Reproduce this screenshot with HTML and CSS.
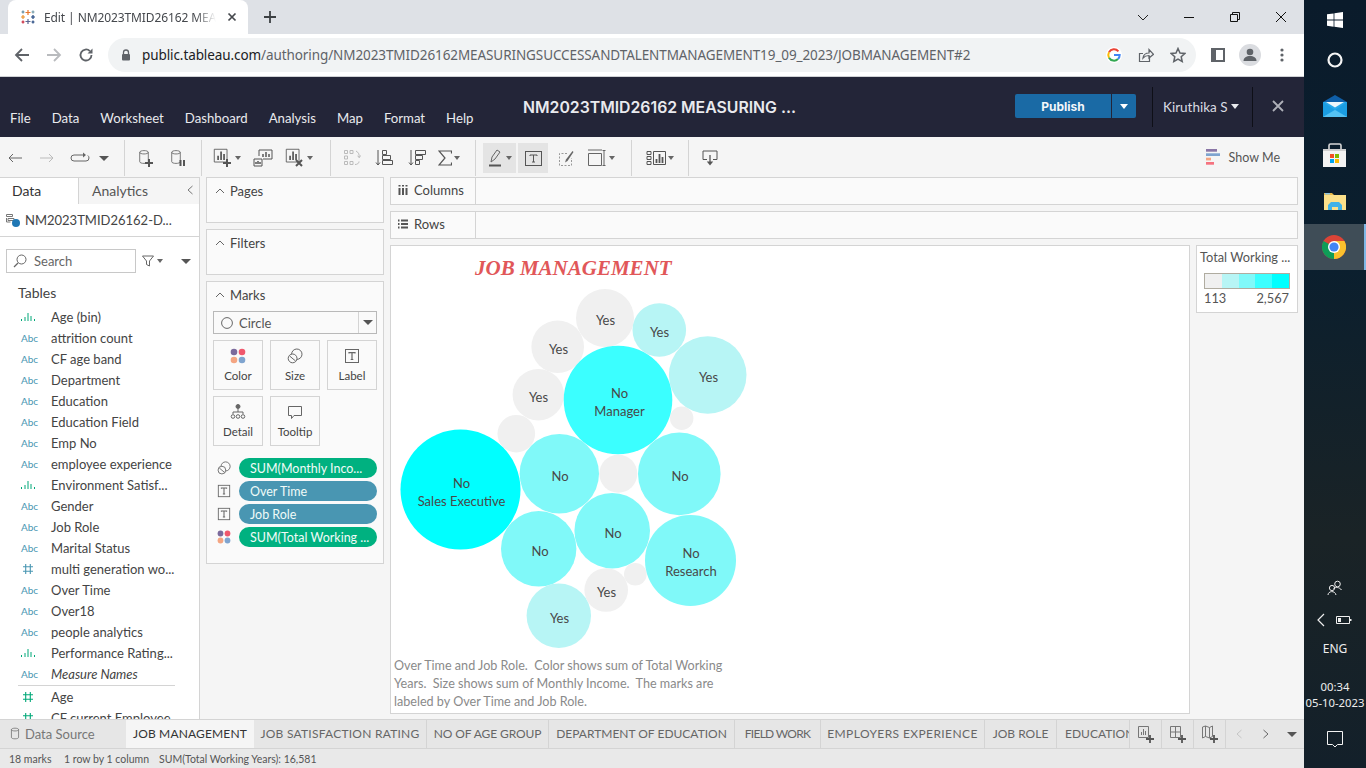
FILE: index.html
```html
<!DOCTYPE html>
<html lang="en">
<head>
<meta charset="utf-8">
<title>Edit | NM2023TMID26162 MEASURING</title>
<link rel="stylesheet" href="styles.css">
</head>
<body>
<svg class="defs" aria-hidden="true">
  <symbol id="i-t" viewBox="0 0 16 16"><rect x="1.5" y="1.5" width="13" height="13" fill="none" stroke="#666"/><path d="M5 5.5V4.6h6v.9M8 4.6v7M6.7 11.5h2.6" fill="none" stroke="#666" stroke-width="1.2"/></symbol>
  <symbol id="i-size" viewBox="0 0 16 16"><circle cx="9.8" cy="6.2" r="5.2" fill="none" stroke="#666"/><circle cx="5.6" cy="10.4" r="4.4" fill="#fafafa" stroke="#666"/><path d="M2.6 8l6 5" stroke="#666"/></symbol>
  <symbol id="i-color" viewBox="0 0 16 16"><circle cx="4" cy="4" r="3.3" fill="#7b6a9c"/><circle cx="12" cy="4" r="3.3" fill="#f0586d"/><circle cx="4" cy="12" r="3.3" fill="#f4a582"/><circle cx="12" cy="12" r="3.3" fill="#7fa4cf"/></symbol>
  <symbol id="i-bin" viewBox="0 0 16 10"><path d="M1.5 9V7M5 9V5M8 9V1M11 9V4M14.500 9V7" stroke="#00a878" fill="none"/></symbol>
  <symbol id="i-num" viewBox="0 0 12 12"><path d="M3.700 1v10M8.300 1v10M1 3.700h10M1 8.300h10" stroke="currentColor" fill="none" stroke-width="1.100"/></symbol>
  <symbol id="i-cyl" viewBox="0 0 14 18"><path d="M2 3.500c0-2.600 10-2.600 10 0v11c0 2.600-10 2.600-10 0z M2 3.500c0 2.600 10 2.600 10 0" fill="none" stroke="#666"/></symbol>
  <symbol id="i-bars" viewBox="0 0 20 20"><path d="M1.500 1.500h15v15h-15z" fill="none" stroke="#555"/><path d="M6 14V9M9.500 14V4M13 14V7" stroke="#555" stroke-width="2" fill="none"/></symbol>
</svg>

<div class="screen">
  <div class="browser">
    <div class="tabstrip">
      <div class="ctab">
        <svg class="favicon" width="16" height="16" viewBox="0 0 16 16" fill="none" stroke-width="1.200"><path d="M8 1v5M5.500 3.500h5" stroke="#e8762c"/><path d="M8 10v5M5.500 12.500h5" stroke="#5b6591"/><path d="M3 6v4M1 8h4" stroke="#eb912b"/><path d="M13 6v4M11 8h4" stroke="#1f447e"/><path d="M3 1.500v3M1.500 3h3" stroke="#59879b"/><path d="M13 1.500v3M11.500 3h3" stroke="#7099a6"/><path d="M3 11.500v3M1.500 13h3" stroke="#c72035"/><path d="M13 11.500v3M11.500 13h3" stroke="#1f447e"/></svg>
        <span class="ctab-title">Edit | NM2023TMID26162 MEASURING</span>
        <svg class="ctab-x" width="10" height="10" viewBox="0 0 10 10"><path d="M1.500 1.500l7 7M8.500 1.500l-7 7" stroke="#45484d" stroke-width="1.700"/></svg>
      </div>
      <svg class="newtab" width="14" height="14" viewBox="0 0 14 14"><path d="M7 1v12M1 7h12" stroke="#3c4043" stroke-width="1.800"/></svg>
      <div class="winctl">
        <svg width="46" height="14" viewBox="0 0 46 14"><path d="M18 5l5 5 5-5" fill="none" stroke="#222"/></svg>
        <svg width="46" height="14" viewBox="0 0 46 14"><path d="M18 7.500h10" stroke="#111"/></svg>
        <svg width="46" height="14" viewBox="0 0 46 14"><path d="M18.500 4.500h7v7h-7zM20.500 4.500v-2h7v7h-2" fill="none" stroke="#111"/></svg>
        <svg width="46" height="14" viewBox="0 0 46 14"><path d="M18 2l10 10M28 2L18 12" stroke="#111"/></svg>
      </div>
    </div>
    <div class="omnirow">
      <svg class="navic" width="16" height="16" viewBox="0 0 16 16"><path d="M15 8H2M8 2L2 8l6 6" fill="none" stroke="#5f6368" stroke-width="1.800"/></svg>
      <svg class="navic" width="16" height="16" viewBox="0 0 16 16"><path d="M1 8h13M8 2l6 6-6 6" fill="none" stroke="#b9bbbe" stroke-width="1.800"/></svg>
      <svg class="navic" width="16" height="16" viewBox="0 0 16 16"><path d="M13.500 8a5.500 5.500 0 1 1-1.600-3.900" fill="none" stroke="#5f6368" stroke-width="1.800"/><path d="M14.500 1.500v5h-5z" fill="#5f6368"/></svg>
      <div class="omnibox">
        <svg class="lock" width="10" height="12" viewBox="0 0 10 12"><path d="M2.500 5V3.500a2.500 2.500 0 0 1 5 0V5" fill="none" stroke="#5f6368" stroke-width="1.300"/><rect x="1" y="5" width="8" height="6.500" rx="1" fill="#5f6368"/></svg>
        <span class="url"><b>public.tableau.com</b>/authoring/NM2023TMID26162MEASURINGSUCCESSANDTALENTMANAGEMENT19_09_2023/JOBMANAGEMENT#2</span>
        <div class="omni-icons">
          <svg width="16" height="16" viewBox="0 0 16 16" fill="none" stroke-width="2"><circle cx="8" cy="8" r="8" fill="#fff"/><path d="M12.400 4.300A5.700 5.700 0 0 0 3 5.300" stroke="#ea4335"/><path d="M3 5.300a5.700 5.700 0 0 0 0 5.400" stroke="#fbbc05"/><path d="M3 10.700a5.700 5.700 0 0 0 9 1.300" stroke="#34a853"/><path d="M12 12a5.700 5.700 0 0 0 1.700-4H8" stroke="#4285f4"/></svg>
          <svg width="16" height="16" viewBox="0 0 16 16" fill="none" stroke="#5f6368" stroke-width="1.200"><path d="M11.500 9v5.500h-10v-8H5"/><path d="M5 11c.5-3.500 3-5 6-5V2.500l4.500 4.800L11 11V8.500c-2.500 0-4.500.8-6 2.500z"/></svg>
          <svg width="16" height="16" viewBox="0 0 16 16"><path d="M8 1.500l2 4.500 4.800.5-3.600 3.200 1 4.800L8 12l-4.200 2.500 1-4.800L1.200 6.500 6 6z" fill="none" stroke="#5f6368" stroke-width="1.500"/></svg>
        </div>
      </div>
      <div class="profile">
        <svg width="14" height="14" viewBox="0 0 14 14"><path d="M0 0h14v14H0z M5 2v10h7V2z" fill="#5f6368" fill-rule="evenodd"/></svg>
        <span class="avatar"><svg width="14" height="14" viewBox="0 0 14 14"><circle cx="7" cy="4" r="3.300" fill="#5f6368"/><path d="M0.500 13c0-3.500 3-5 6.500-5s6.500 1.500 6.500 5z" fill="#5f6368"/></svg></span>
        <svg width="4" height="14" viewBox="0 0 4 14"><circle cx="2" cy="2" r="1.600" fill="#5f6368"/><circle cx="2" cy="7" r="1.600" fill="#5f6368"/><circle cx="2" cy="12" r="1.600" fill="#5f6368"/></svg>
      </div>
    </div>
  </div>

  <header class="appbar">
    <nav class="menu"><span>File</span><span>Data</span><span>Worksheet</span><span>Dashboard</span><span>Analysis</span><span>Map</span><span>Format</span><span>Help</span></nav>
    <div class="wbtitle">NM2023TMID26162 MEASURING ...</div>
    <div class="appright">
      <div class="publish"><span class="pub-main">Publish</span><span class="pub-arrow"></span></div>
      <div class="user">Kiruthika S<span class="user-caret"></span></div>
      <svg class="appclose" width="12" height="12" viewBox="0 0 12 12"><path d="M1 1l10 10M11 1L1 11" stroke="#aeb0b8" stroke-width="1.800"/></svg>
    </div>
  </header>

  <div class="toolbar">
    <div class="tg tg1">
      <span class="tb w30"><svg width="14" height="10" viewBox="0 0 14 10"><path d="M14 5H1M5 1L1 5l4 4" fill="none" stroke="#666"/></svg></span>
      <span class="tb w33"><svg width="14" height="10" viewBox="0 0 14 10"><path d="M0 5h13M9 1l4 4-4 4" fill="none" stroke="#bbb"/></svg></span>
      <span class="tb w34"><svg width="20" height="12" viewBox="0 0 20 12"><path d="M13 3H4a3 3 0 0 0 0 6h12a3 3 0 0 0 3-3c0-1-.4-2-1.200-2.500" fill="none" stroke="#666"/><path d="M13 .5v5l3-2.500z" fill="#666"/></svg></span>
      <span class="tb w14"><i class="caret big"></i></span>
    </div>
    <div class="tg tg2">
      <span class="tb w32"><svg width="18" height="18" viewBox="0 0 18 18"><use href="#i-cyl" width="12" height="16"/><path d="M11 10v8M7 14h8" stroke="#555" stroke-width="2" fill="none"/></svg></span>
      <span class="tb w32"><svg width="18" height="18" viewBox="0 0 18 18"><use href="#i-cyl" width="12" height="16"/><path d="M10.500 11v6M14 11v6" stroke="#555" stroke-width="2" fill="none"/></svg></span>
    </div>
    <div class="tg tg3">
      <span class="tb w34"><svg width="20" height="20" viewBox="0 0 20 20"><use href="#i-bars" width="17" height="17"/><path d="M14 11v8M10 15h8" stroke="#555" stroke-width="2" fill="none"/></svg><i class="caret"></i></span>
      <span class="tb w38"><svg width="20" height="18" viewBox="0 0 20 18"><path d="M6 7V1h13v9h-9M1 10h8v7H1z" fill="#f5f5f5" stroke="#555"/><path d="M10 8V5M13 8V3M16 8V5M3 15v-2M5 15v-3M7 15v-2" stroke="#555" stroke-width="1.500"/></svg></span>
      <span class="tb w34"><svg width="20" height="20" viewBox="0 0 20 20"><use href="#i-bars" width="17" height="17"/><path d="M11 12l6 6M17 12l-6 6" stroke="#555" stroke-width="2" fill="none"/></svg><i class="caret"></i></span>
    </div>
    <div class="tg tg4">
      <span class="tb w32"><svg width="18" height="18" viewBox="0 0 18 18" fill="none" stroke="#bbb"><path d="M1.500 1.500h3v3h-3zM7 1.500h3v3H7zM1.500 7h3v3h-3zM1.500 12.500h3v3h-3zM7 12.500h3v3H7zM13 2a6 6 0 0 1 3 6.500M16.500 8.500l-2-1.500M16.500 8.500l1-2M12 15.500c2 0 4-1 4-3"/></svg></span>
      <span class="tb w32"><svg width="18" height="18" viewBox="0 0 18 18" fill="none" stroke="#555"><path d="M3 1v15M1 13.500l2 2.500 2-2.500M7.500 1.500h4v4h-4zM7.500 6.500h8v4h-8zM7.500 11.500h10v4h-10z"/></svg></span>
      <span class="tb w34"><svg width="18" height="18" viewBox="0 0 18 18" fill="none" stroke="#555"><path d="M3 1v15M1 13.500l2 2.500 2-2.500M7.500 11.500h4v4h-4zM7.500 6.500h7v4h-7zM7.500 1.500h10v4h-10z"/></svg></span>
      <span class="tb w30"><svg width="14" height="16" viewBox="0 0 14 16"><path d="M13.500 3.500V1H1l6 7-6 7h12.500v-2.500" fill="none" stroke="#555" stroke-width="1.200"/></svg><i class="caret"></i></span>
    </div>
    <div class="tg tg5">
      <span class="tb w33 on"><svg width="16" height="18" viewBox="0 0 16 18"><path d="M3 13l1-5 5-7 3 2-5 7z" fill="none" stroke="#666"/><path d="M1 16.500h12" stroke="#555" stroke-width="2"/></svg><i class="caret"></i></span>
      <span class="tb w30 on gap2"><svg width="17" height="15" viewBox="0 0 17 15"><rect x=".5" y=".5" width="16" height="14" fill="none" stroke="#555"/><path d="M5 5V4h7v1M8.500 4v7M7 11h3" fill="none" stroke="#555"/></svg></span>
      <span class="tb w32"><svg width="16" height="16" viewBox="0 0 16 16"><path d="M9 3.500H1.500v12h12V8" fill="none" stroke="#999" stroke-dasharray="2 1.500"/><path d="M14.500 1L8 9.500 7 12.500l2.500-1.500L15.500 2z" fill="#666"/></svg></span>
      <span class="tb w38"><svg width="20" height="18" viewBox="0 0 20 18" fill="none" stroke="#666"><path d="M1 1h14M1.500 4.500h13v12h-13zM17 2v14M15.500 1.500h3M15.500 16.500h3"/></svg><i class="caret"></i></span>
    </div>
    <div class="tg tg6">
      <span class="tb w44"><svg width="20" height="16" viewBox="0 0 20 16" fill="none" stroke="#555"><path d="M1 1.500h4v3H1zM1 6.500h4v3H1zM1 11.500h4v3H1zM7.500 1.500h12v13h-12z"/><path d="M10.500 13V9M13.500 13V4M16.500 13V7" stroke-width="1.800"/></svg><i class="caret"></i></span>
    </div>
    <div class="tg tg7">
      <span class="tb w34"><svg width="16" height="16" viewBox="0 0 16 16" fill="none" stroke="#555"><path d="M5 9.500H1V1h14v8.500h-4"/><path d="M8 5v9" stroke-width="1.300"/><path d="M4.800 11.500h6.400L8 15.500z" fill="#555" stroke="none"/></svg></span>
    </div>
    <div class="showme">
      <svg width="14" height="16" viewBox="0 0 14 16"><path d="M0 0h11v2.700H0z" fill="#8a76a6"/><path d="M0 4.300h14V7H0z" fill="#7fa4cf"/><path d="M0 8.700h5v2.700H0z" fill="#f4a582"/><path d="M0 13h8v2.700H0z" fill="#f5727f"/></svg>
      <span>Show Me</span>
    </div>
  </div>

  <main class="workspace">
    <aside class="datapane">
      <div class="dp-tabs">
        <div class="dp-tab active">Data</div>
        <div class="dp-tab">Analytics<svg width="6" height="10" viewBox="0 0 6 10"><path d="M5.500 1L1 5l4.500 4" fill="none" stroke="#777"/></svg></div>
      </div>
      <div class="dsrow">
        <svg width="16" height="16" viewBox="0 0 16 16"><path d="M1.500 2.500h6v2h-6zM3 6.500h6v2H3zM1.500 6v4h4" fill="none" stroke="#777"/><circle cx="11" cy="11" r="4" fill="#1f77b4"/></svg>
        <span>NM2023TMID26162-D...</span>
      </div>
      <div class="searchrow">
        <div class="searchbox"><svg width="14" height="14" viewBox="0 0 14 14"><circle cx="8.500" cy="5.500" r="4.500" fill="none" stroke="#666"/><path d="M5 9l-4 4" stroke="#666" stroke-width="1.300"/></svg><span>Search</span></div>
        <svg class="filtic" width="12" height="12" viewBox="0 0 12 12"><path d="M.5 1h11L7.500 6v5l-3-1.500V6z" fill="none" stroke="#666"/></svg><i class="caret"></i>
        <span class="vsep"></span>
        <i class="caret big"></i>
      </div>
      <div class="tables-h">Tables</div>
      <ul class="fields">
        <li><svg class="fic" width="16" height="10"><use href="#i-bin"/></svg>Age (bin)</li>
        <li><span class="abc">Abc</span>attrition count</li>
        <li><span class="abc">Abc</span>CF age band</li>
        <li><span class="abc">Abc</span>Department</li>
        <li><span class="abc">Abc</span>Education</li>
        <li><span class="abc">Abc</span>Education Field</li>
        <li><span class="abc">Abc</span>Emp No</li>
        <li><span class="abc">Abc</span>employee experience</li>
        <li><svg class="fic" width="16" height="10"><use href="#i-bin"/></svg>Environment Satisf...</li>
        <li><span class="abc">Abc</span>Gender</li>
        <li><span class="abc">Abc</span>Job Role</li>
        <li><span class="abc">Abc</span>Marital Status</li>
        <li><svg class="fic num dim" width="16" height="12"><use href="#i-num" width="12" height="12" x="2"/></svg>multi generation wo...</li>
        <li><span class="abc">Abc</span>Over Time</li>
        <li><span class="abc">Abc</span>Over18</li>
        <li><span class="abc">Abc</span>people analytics</li>
        <li><svg class="fic" width="16" height="10"><use href="#i-bin"/></svg>Performance Rating...</li>
        <li><span class="abc">Abc</span><em>Measure Names</em></li>
        <li class="fdiv"></li>
        <li><svg class="fic num" width="16" height="12"><use href="#i-num" width="12" height="12" x="2"/></svg>Age</li>
        <li><svg class="fic num" width="16" height="12"><use href="#i-num" width="12" height="12" x="2"/></svg>CF current Employee</li>
      </ul>
    </aside>

    <section class="cards">
      <div class="card short"><div class="card-h"><svg width="10" height="6" viewBox="0 0 10 6"><path d="M1 5l4-4 4 4" fill="none" stroke="#666"/></svg>Pages</div></div>
      <div class="card short"><div class="card-h"><svg width="10" height="6" viewBox="0 0 10 6"><path d="M1 5l4-4 4 4" fill="none" stroke="#666"/></svg>Filters</div></div>
      <div class="card marks">
        <div class="card-h"><svg width="10" height="6" viewBox="0 0 10 6"><path d="M1 5l4-4 4 4" fill="none" stroke="#666"/></svg>Marks</div>
        <div class="marktype">
          <span class="mt-main"><svg width="12" height="12" viewBox="0 0 12 12"><circle cx="6" cy="6" r="5.400" fill="none" stroke="#666"/></svg>Circle</span>
          <span class="mt-arrow"><i class="caret big"></i></span>
        </div>
        <div class="markbtns">
          <div class="mbtn"><svg width="16" height="16"><use href="#i-color"/></svg>Color</div>
          <div class="mbtn"><svg width="16" height="16"><use href="#i-size"/></svg>Size</div>
          <div class="mbtn"><svg width="16" height="16"><use href="#i-t"/></svg>Label</div>
          <div class="mbtn"><svg width="16" height="16" viewBox="0 0 16 16" fill="none" stroke="#666"><circle cx="8" cy="2.500" r="2" fill="#666"/><path d="M8 5v3M3 10V8h10v2"/><circle cx="3" cy="12.500" r="1.800"/><circle cx="8" cy="12.500" r="1.800"/><circle cx="13" cy="12.500" r="1.800"/></svg>Detail</div>
          <div class="mbtn"><svg width="16" height="16" viewBox="0 0 16 16"><path d="M1.500 2.500h13v9H7l-2.500 3v-3h-3z" fill="none" stroke="#666"/></svg>Tooltip</div>
        </div>
        <div class="pills">
          <div class="pillrow"><svg width="14" height="14"><use href="#i-size" width="14" height="14"/></svg><span class="pill m">SUM(Monthly Inco...</span></div>
          <div class="pillrow"><svg width="14" height="14"><use href="#i-t" width="14" height="14"/></svg><span class="pill d">Over Time</span></div>
          <div class="pillrow"><svg width="14" height="14"><use href="#i-t" width="14" height="14"/></svg><span class="pill d">Job Role</span></div>
          <div class="pillrow"><svg width="14" height="14"><use href="#i-color" width="14" height="14"/></svg><span class="pill m">SUM(Total Working ...</span></div>
        </div>
      </div>
    </section>

    <section class="sheet">
      <div class="shelf"><div class="shelf-l"><svg width="10" height="10" viewBox="0 0 10 10"><path d="M1.500 3v7M5 3v7M8.500 3v7M1.500 0v1.500M5 0v1.500M8.500 0v1.500" stroke="#555" stroke-width="2"/></svg>Columns</div></div>
      <div class="shelf"><div class="shelf-l"><svg width="10" height="10" viewBox="0 0 10 10"><path d="M3 1.500h7M3 5h7M3 8.500h7M0 1.500h1.500M0 5h1.500M0 8.500h1.500" stroke="#555" stroke-width="2"/></svg>Rows</div></div>
      <div class="viewrow">
        <div class="view">
          <h1 class="viz-title">JOB MANAGEMENT</h1>
          <svg class="viz" width="798" height="371" viewBox="391 281 798 371">
            <g class="c0"><circle cx="605" cy="318" r="29"/><circle cx="557.700" cy="346.700" r="26.300"/><circle cx="538.300" cy="394.700" r="25.700"/><circle cx="681.700" cy="418.300" r="11.700"/><circle cx="516.300" cy="433.700" r="18.800"/><circle cx="618.300" cy="473.700" r="19"/><circle cx="606.200" cy="590" r="21.800"/><circle cx="635.300" cy="574.300" r="11.300"/></g>
            <g class="c1"><circle cx="659.300" cy="330" r="26.800"/><circle cx="707.700" cy="375" r="38.800"/><circle cx="558.800" cy="615.800" r="32.200"/></g>
            <g class="c2"><circle cx="559.300" cy="473.800" r="39.700"/><circle cx="679.300" cy="473.900" r="41.300"/><circle cx="612.200" cy="530.700" r="37.800"/><circle cx="538.700" cy="548.800" r="37.700"/><circle cx="690.500" cy="560.500" r="45.500"/></g>
            <circle class="c3" cx="618" cy="400" r="54.300"/>
            <circle class="c4" cx="460.500" cy="489.600" r="60"/>
            <g class="lbl" transform="translate(0 1)">
              <text x="605.500" y="323.500">Yes</text><text x="659.500" y="335.500">Yes</text><text x="558.500" y="352.500">Yes</text><text x="708.500" y="380.500">Yes</text><text x="538.500" y="400.500">Yes</text>
              <text x="619.500" y="397">No</text><text x="619.500" y="415">Manager</text>
              <text x="461.500" y="487">No</text><text x="461.500" y="505">Sales Executive</text>
              <text x="560" y="480">No</text><text x="680" y="480">No</text><text x="613" y="537">No</text><text x="540" y="555">No</text>
              <text x="691" y="557">No</text><text x="691" y="575">Research</text>
              <text x="606.500" y="596">Yes</text><text x="559.500" y="622">Yes</text>
            </g>
          </svg>
          <p class="caption">Over Time and Job Role.&nbsp; Color shows sum of Total Working<br>Years.&nbsp; Size shows sum of Monthly Income.&nbsp; The marks are<br>labeled by Over Time and Job Role.</p>
        </div>
        <div class="legend">
          <div class="lg-title">Total Working ...</div>
          <div class="ramp"><i class="s0"></i><i class="s1"></i><i class="s2"></i><i class="s3"></i><i class="s4"></i></div>
          <div class="lg-vals"><span>113</span><span>2,567</span></div>
        </div>
      </div>
    </section>
  </main>

  <div class="sheettabs">
    <div class="dsource"><svg width="10" height="13" viewBox="0 0 14 18"><use href="#i-cyl"/></svg>Data Source</div>
    <div class="tablist">
      <span class="stab active">JOB MANAGEMENT</span>
      <span class="stab">JOB SATISFACTION RATING</span>
      <span class="stab">NO OF AGE GROUP</span>
      <span class="stab">DEPARTMENT OF EDUCATION</span>
      <span class="stab">FIELD WORK</span>
      <span class="stab">EMPLOYERS EXPERIENCE</span>
      <span class="stab">JOB ROLE</span>
      <span class="stab">EDUCATION FIELD</span>
    </div>
    <span class="tabtool"><svg width="18" height="18" viewBox="0 0 18 18"><path d="M1.500 1.500h10v11h-10z" fill="none" stroke="#777"/><path d="M4.500 10V7M6.500 10V4M8.500 10V6" stroke="#777"/><path d="M13 10v8M9 14h8" stroke="#555" stroke-width="1.800"/></svg></span>
    <span class="tabtool"><svg width="18" height="18" viewBox="0 0 18 18"><path d="M1.500 1.500h10v11h-10zM1.500 7h10M6.500 1.500v11" fill="none" stroke="#777"/><path d="M13 10v8M9 14h8" stroke="#555" stroke-width="1.800"/></svg></span>
    <span class="tabtool"><svg width="18" height="18" viewBox="0 0 18 18"><path d="M1.500 2v11l3-1.500 4 1.500 3-1.500V1l-3 1.500-4-1.500zM4.500 1v10.500M8.500 2.500V13" fill="none" stroke="#777"/><path d="M13 10v8M9 14h8" stroke="#555" stroke-width="1.800"/></svg></span>
    <span class="tabnav"><svg width="6" height="10" viewBox="0 0 6 10"><path d="M5.500 1L1 5l4.500 4" fill="none" stroke="#c4c4c4"/></svg></span>
    <span class="tabnav"><svg width="6" height="10" viewBox="0 0 6 10"><path d="M.5 1L5 5 .5 9" fill="none" stroke="#666"/></svg></span>
    <span class="tabnav"><i class="caret big"></i></span>
  </div>
  <footer class="status"><span>18 marks</span><span>1 row by 1 column</span><span>SUM(Total Working Years): 16,581</span></footer>
</div>

<aside class="taskbar">
  <div class="tk tk-win"><svg width="16" height="16" viewBox="0 0 16 16"><path d="M0 2.300l6.600-.9v6.200H0zM7.400 1.300L16 0v7.600H7.400zM0 8.400h6.600v6.300L0 13.700zM7.400 8.400H16V16l-8.600-1.200z" fill="#fff"/></svg></div>
  <div class="tk tk-cortana"><svg width="16" height="16" viewBox="0 0 16 16"><circle cx="8" cy="8" r="6.500" fill="none" stroke="#f4f4f4" stroke-width="2.200"/></svg></div>
  <div class="tk tk-mail"><svg width="24" height="22" viewBox="0 0 24 22"><path d="M0 7L12 0l12 7v3H0z" fill="#0f5fa8"/><path d="M0 7h24v15H0z" fill="#29a8ea"/><path d="M3 7h18l-9 5.500z" fill="#eef6fb"/><path d="M0 7l12 8 12-8v15l-12-7.500L0 22z" fill="#1b9de2"/><path d="M12 15l12 7H0z" fill="#55c2f2"/></svg></div>
  <div class="tk tk-store"><svg width="24" height="24" viewBox="0 0 24 24"><path d="M6 6V2.500A1.500 1.500 0 0 1 7.500 1h9A1.500 1.500 0 0 1 18 2.500V6" fill="none" stroke="#d8d8d8" stroke-width="1.600"/><path d="M0 6h23v18H0z" fill="#f3f3f3"/><path d="M0 6h23v2H0z" fill="#cfcfcf"/><path d="M7 11h4v4H7z" fill="#f25022"/><path d="M12 11h4v4h-4z" fill="#7fba00"/><path d="M7 16h4v4H7z" fill="#00a4ef"/><path d="M12 16h4v4h-4z" fill="#ffb900"/></svg></div>
  <div class="tk tk-folder"><svg width="22" height="18" viewBox="0 0 22 18"><path d="M0 1h8l2 2h12v15H0z" fill="#e8b94a"/><path d="M0 3h22v15H0z" fill="#fbe08a"/><path d="M1 1h5v1.500H1z" fill="#8cc4e0"/><path d="M4 18v-5l3-3h8l3 3v5h-4v-3H8v3z" fill="#3fb2e8"/></svg></div>
  <div class="tk tk-chrome"><svg width="24" height="24" viewBox="0 0 24 24"><circle cx="12" cy="12" r="12" fill="#db4437"/><path d="M12 12L1.600 6A12 12 0 0 0 12 24z" fill="#0f9d58"/><path d="M12 12v12A12 12 0 0 0 22.400 6H12z" fill="#fbc02d"/><circle cx="12" cy="12" r="6" fill="#fff"/><circle cx="12" cy="12" r="4.600" fill="#4285f4"/></svg></div>
  <div class="tray">
    <svg width="16" height="16" viewBox="0 0 16 16" fill="none" stroke="#eee"><circle cx="10.500" cy="4" r="2.800"/><path d="M6.500 8.500c2-1.500 6-1.500 8 1.500"/><circle cx="5" cy="8" r="2.600"/><path d="M1 15c0-4 7-5 8 0"/></svg>
    <div class="tray-row"><svg width="8" height="14" viewBox="0 0 8 14"><path d="M7 1L1 7l6 6" fill="none" stroke="#eee" stroke-width="1.200"/></svg><svg width="16" height="10" viewBox="0 0 16 10"><path d="M.5 1.500h13v7H.5z" fill="none" stroke="#eee"/><path d="M2 3h3v4H2z" fill="#eee"/><path d="M14 4h1.500v2H14z" fill="#eee"/></svg></div>
    <div class="lang">ENG</div>
    <div class="clock">00:34<br>05-10-2023</div>
    <svg class="notif" width="16" height="17" viewBox="0 0 16 17"><path d="M.5.500h15v13h-5L8 16l-2.500-2.500h-5z" fill="none" stroke="#f4f4f4"/></svg>
  </div>
</aside>
</body>
</html>
```

FILE: styles.css
```css
* { box-sizing: border-box; }
html, body { margin: 0; padding: 0; height: 768px; overflow: hidden; }
body { display: flex; width: 1366px; font-family: "Lato", "Liberation Sans", sans-serif; color: #333; background: #f5f5f5; }
.defs { display: none; }
svg { display: block; flex: none; }
ul, h1, p { margin: 0; padding: 0; }

.screen { width: 1304px; height: 768px; display: flex; flex-direction: column; flex: none; }

/* browser chrome */
.browser { font-family: "Noto Sans", "Open Sans", sans-serif; }
.tabstrip { height: 34px; background: #dee1e6; display: flex; align-items: center; }
.ctab { width: 240px; height: 34px; margin-left: 8px; background: #fff; border-radius: 8px 8px 0 0; display: flex; align-items: center; padding: 0 11px 0 12px; flex: none; }
.favicon { margin-right: 8px; }
.ctab-title { width: 172px; overflow: hidden; white-space: nowrap; font-size: 12px; letter-spacing: -.1px; color: #45484d; -webkit-mask-image: linear-gradient(90deg, #000 88%, transparent); mask-image: linear-gradient(90deg, #000 88%, transparent); }
.ctab-x { margin-left: auto; }
.newtab { margin-left: 15px; }
.winctl { margin-left: auto; display: flex; margin-right: 0; }
.omnirow { height: 43px; background: #fff; border-bottom: 1px solid #d0d2d5; display: flex; align-items: center; padding: 0 0 1px 14px; }
.navic { margin-right: 16px; }
.navic:nth-child(3) { margin-right: 14px; }
.omnibox { width: 1088px; height: 34px; background: #f1f3f4; border-radius: 17px; display: flex; align-items: center; padding: 0 10px 0 13px; }
.lock { margin-right: 11px; }
.url { font-size: 13.500px; color: #5f6368; white-space: nowrap; letter-spacing: -.09px; }
.url b { font-weight: 400; color: #202124; }
.omni-icons { margin-left: auto; display: flex; gap: 16px; }
.profile { display: flex; align-items: center; margin-left: 15px; }
.avatar { width: 22px; height: 22px; margin: 0 19px 0 14px; border-radius: 50%; background: #dadce0; display: flex; align-items: center; justify-content: center; }

/* tableau header */
.appbar { height: 60px; background: #232538; color: #e9eaee; display: flex; padding-left: 10px; flex: none; }
.menu { width: 513px; display: flex; gap: 21px; align-items: flex-end; padding-bottom: 11px; font-size: 13.200px; }
.wbtitle { font-family: "Inter", "Liberation Sans", sans-serif; font-size: 15.800px; font-weight: 600; padding-top: 21px; color: #e9eaee; white-space: nowrap; }
.appright { margin-left: auto; display: flex; align-items: center; height: 60px; }
.publish { display: flex; height: 24px; margin-top: -2px; }
.pub-main { width: 96px; background: #1a6aa5; border-radius: 2px 0 0 2px; color: #f2f6fa; font-family: "Inter", sans-serif; font-size: 12px; font-weight: 700; display: flex; align-items: center; justify-content: center; }
.pub-arrow { width: 24px; margin-left: 1px; background: #1a6aa5; border-radius: 0 2px 2px 0; display: flex; align-items: center; justify-content: center; }
.pub-arrow::after { content: ""; border: 4px solid transparent; border-top: 5px solid #fff; border-bottom: 0; }
.user { width: 101px; height: 40px; margin: 0 0 0 16px; border: solid #0e0f17; border-width: 0 1px; display: flex; align-items: center; padding-left: 10px; font-size: 13.500px; color: #d9dbe2; margin-top: -1px; }
.user-caret { margin-left: 3px; border: 4px solid transparent; border-top: 5px solid #e9eaee; border-bottom: 0; }
.appclose { margin: -2px 20px 0 19px; }

/* toolbar */
.toolbar { height: 40px; flex: none; background: #f5f5f5; display: flex; align-items: stretch; padding-top: 3px; padding-bottom: 1px; }
.tg { display: flex; align-items: center; border-right: 1px solid #d4d4d4; height: 36px; }
.tg1 { width: 125px; }
.tg2 { width: 77px; padding-left: 6px; }
.tg3 { width: 129px; padding-left: 8px; }
.tg4 { width: 145px; padding-left: 5px; }
.tg5 { width: 156px; padding-left: 7px; }
.tg6 { width: 57px; padding-left: 6px; }
.tg7 { border: 0; padding-left: 4px; width: 40px; }
.tb { display: flex; align-items: center; justify-content: center; height: 30px; gap: 2px; }
.w14 { width: 14px; } .w30 { width: 30px; } .w32 { width: 32px; } .w33 { width: 33px; } .w34 { width: 34px; } .w38 { width: 38px; } .w44 { width: 44px; }
.on { background: #e4e4e4; }
.gap2 { margin-left: 2px; margin-right: 2px; }
.caret { display: inline-block; flex: none; border: 3px solid transparent; border-top: 4px solid #666; border-bottom: 0; }
.caret.big { border-width: 5px 5px 0; border-top-color: #555; }
.showme { margin-left: auto; display: flex; align-items: center; gap: 9px; padding-right: 24px; font-size: 12.500px; color: #555; margin-top: -2px; }

/* workspace */
.workspace { flex: 1; min-height: 0; background: #f5f5f5; display: grid; grid-template-columns: 200px 178px 908px; column-gap: 6px; }
.datapane { background: #fff; border-right: 1px solid #d4d4d4; border-top: 1px solid #d4d4d4; display: flex; flex-direction: column; min-height: 0; overflow: hidden; }
.dp-tabs { height: 26px; display: flex; flex: none; font-size: 14px; }
.dp-tab { display: flex; align-items: center; justify-content: space-between; padding-bottom: 2px; }
.dp-tab.active { width: 79px; padding-left: 12px; background: #fff; color: #333; border-right: 1px solid #d4d4d4; }
.dp-tab:not(.active) { flex: 1; padding-left: 13px; padding-right: 6px; background: #f5f5f5; color: #555; }
.dsrow { height: 33px; flex: none; display: flex; align-items: center; gap: 4px; padding: 0 0 1px 5px; border-bottom: 1px solid #d4d4d4; font-size: 13px; color: #444; }
.searchrow { height: 47px; flex: none; display: flex; align-items: center; padding: 1px 9px 0 6px; }
.searchbox { width: 130px; height: 24px; flex: none; border: 1px solid #c8c8c8; display: flex; align-items: center; gap: 7px; padding-left: 6px; font-size: 13px; color: #666; margin-right: 6px; }
.filtic { margin-right: 3px; }
.vsep { width: 1px; height: 24px; background: #d4d4d4; margin: 0 11px 0 7px; }
.tables-h { font-size: 14px; line-height: 17px; padding-left: 18px; color: #444; height: 22px; flex: none; }
.fields { list-style: none; flex: 1; min-height: 0; overflow: hidden; }
.fields li { height: 21px; display: flex; align-items: center; font-size: 13px; color: #444; white-space: nowrap; }
.fields .fdiv { height: 1px; margin: 1px 24px 0 18px; background: #d4d4d4; }
.abc { width: 30px; margin-left: 21px; font-size: 10px; color: #4996b2; flex: none; }
.fic { margin-left: 20px; margin-right: 15px; }
.num { color: #00a878; }
.dim { color: #4996b2; }

/* cards */
.cards { display: flex; flex-direction: column; gap: 6px; min-height: 0; }
.card { background: #fafafa; border: 1px solid #d4d4d4; flex: none; }
.card.short { height: 46px; }
.card-h { display: flex; align-items: center; gap: 5px; padding: 5px 0 0 8px; font-size: 13px; color: #444; }
.marks { height: 283px; padding-bottom: 6px; }
.marktype { margin: 8px 6px 0; height: 23px; border: 1px solid #b9b9b9; display: flex; font-size: 13px; color: #555; background: #fafafa; }
.mt-main { flex: 1; display: flex; align-items: center; gap: 6px; padding-left: 7px; }
.mt-arrow { width: 18px; border-left: 1px solid #d4d4d4; display: flex; align-items: center; justify-content: center; }
.markbtns { display: grid; grid-template-columns: repeat(3, 50px); grid-auto-rows: 50px; gap: 6px 7px; margin: 6px 6px 0; }
.mbtn { border: 1px solid #d4d4d4; display: flex; flex-direction: column; align-items: center; justify-content: center; gap: 5px; font-size: 11.500px; color: #444; }
.pills { margin: 12px 6px 0 10px; display: flex; flex-direction: column; gap: 3px; }
.pillrow { display: flex; align-items: center; gap: 8px; }
.pill { width: 138px; height: 20px; border-radius: 10px; color: #f0fbf8; font-size: 12.500px; padding-left: 11px; display: flex; align-items: center; white-space: nowrap; overflow: hidden; }
.pill.m { background: #00b180; }
.pill.d { background: #4996b2; }

/* shelves and view */
.sheet { display: flex; flex-direction: column; gap: 6px; min-height: 0; }
.shelf { height: 28px; flex: none; background: #fafafa; border: 1px solid #d4d4d4; display: flex; }
.shelf-l { width: 85px; border-right: 1px solid #d4d4d4; display: flex; align-items: center; gap: 6px; padding: 0 0 3px 7px; font-size: 13px; color: #444; }
.viewrow { flex: 1; min-height: 0; display: flex; gap: 6px; padding-bottom: 5px; align-items: flex-start; }
.view { width: 800px; height: 469px; background: #fff; border: 1px solid #d4d4d4; display: flex; flex-direction: column; flex: none; }
.viz-title { font-family: "Liberation Serif", serif; font-style: italic; font-weight: 700; font-size: 21px; line-height: 24px; height: 35px; padding: 10px 0 0 84px; color: #e15759; white-space: nowrap; }
.viz { flex: none; }
.c0 { fill: #f0f0f0; }
.c1 { fill: #b7f5f5; }
.c2 { fill: #80f9f9; }
.c3 { fill: #3bffff; }
.c4 { fill: #00ffff; }
.lbl text { font-family: "Lato", sans-serif; font-size: 13px; text-anchor: middle; fill: #484848; }
.caption { font-size: 12.600px; line-height: 18px; padding: 5px 0 0 3px; color: #8a8a8a; white-space: nowrap; }
.legend { flex: 1; height: 68px; background: #fff; border: 1px solid #d4d4d4; padding: 3px 3px 0; font-size: 12.800px; color: #555; }
.lg-title { white-space: nowrap; height: 21px; }
.ramp { height: 16px; margin: 3px 4px 0; border: 1px solid #b0aca0; display: flex; width: 86px; }
.ramp i { flex: 1; }
.s0 { background: #f0f0f0; } .s1 { background: #b7f5f5; } .s2 { background: #80f9f9; } .s3 { background: #3bffff; } .s4 { background: #00ffff; }
.lg-vals { display: flex; justify-content: space-between; padding: 1px 5px 0 4px; }

/* sheet tabs */
.sheettabs { height: 30px; flex: none; background: #e6e6e6; border-top: 1px solid #d4d4d4; border-bottom: 1px solid #d4d4d4; display: flex; align-items: stretch; font-size: 12px; color: #666; }
.dsource { width: 126px; display: flex; align-items: center; gap: 5px; padding: 0 0 1px 10px; font-size: 13px; color: #777; flex: none; }
.tablist { width: 1003px; flex: none; display: grid; grid-template-columns: 128px 173px 122px 186px 86px 164px 72px minmax(0, 1fr); overflow: hidden; }
.stab { display: flex; align-items: center; justify-content: center; white-space: nowrap; border-right: 1px solid #d4d4d4; color: #666; overflow: hidden; padding-bottom: 2px; }
.stab:nth-child(1) { letter-spacing: .15px; }
.stab:nth-child(2) { letter-spacing: .24px; }
.stab:nth-child(3) { letter-spacing: -.1px; }
.stab:nth-child(5) { letter-spacing: -.7px; }
.stab:nth-child(6) { letter-spacing: .4px; }
.stab:last-child { border-right: 0; justify-content: flex-start; padding-left: 8px; }
.stab.active { background: #f5f5f5; color: #333; border-right: 0; }
.tabtool { width: 32px; flex: none; border-left: 1px solid #d4d4d4; display: flex; align-items: center; justify-content: center; }
.tabnav { width: 27px; flex: none; display: flex; align-items: center; justify-content: center; }
.tabnav:last-child { width: 25px; }
.tabtool + .tabnav { border-left: 1px solid #d4d4d4; }
.status { height: 19px; flex: none; background: #e9e9e9; display: flex; align-items: center; padding-left: 9px; font-size: 10.500px; color: #555; white-space: nowrap; }
.status span:nth-child(1) { width: 55px; }
.status span:nth-child(2) { width: 95px; }

/* taskbar */
.taskbar { width: 62px; height: 768px; flex: none; background: linear-gradient(180deg, #0a1b2b 0%, #0b1f2e 35%, #1a2326 70%, #13202a 100%); display: flex; flex-direction: column; align-items: center; color: #eee; }
.tk { width: 62px; display: flex; align-items: center; justify-content: center; flex: none; }
.tk-win { height: 40px; }
.tk-cortana { height: 40px; }
.tk-mail { height: 52px; }
.tk-store { height: 46px; }
.tk-folder { height: 46px; }
.tk-chrome { height: 46px; background: #3f4d57; border-right: 2px solid #7fb8e6; }
.tray { margin-top: auto; display: flex; flex-direction: column; align-items: center; padding-bottom: 20px; }
.tray-row { display: flex; align-items: center; gap: 11px; margin-top: 17px; }
.lang { font-family: "Noto Sans", sans-serif; font-size: 12px; margin-top: 13px; }
.clock { font-family: "Noto Sans", sans-serif; font-size: 11.300px; line-height: 16px; text-align: center; margin-top: 22px; white-space: nowrap; }
.notif { margin-top: 20px; }
```
